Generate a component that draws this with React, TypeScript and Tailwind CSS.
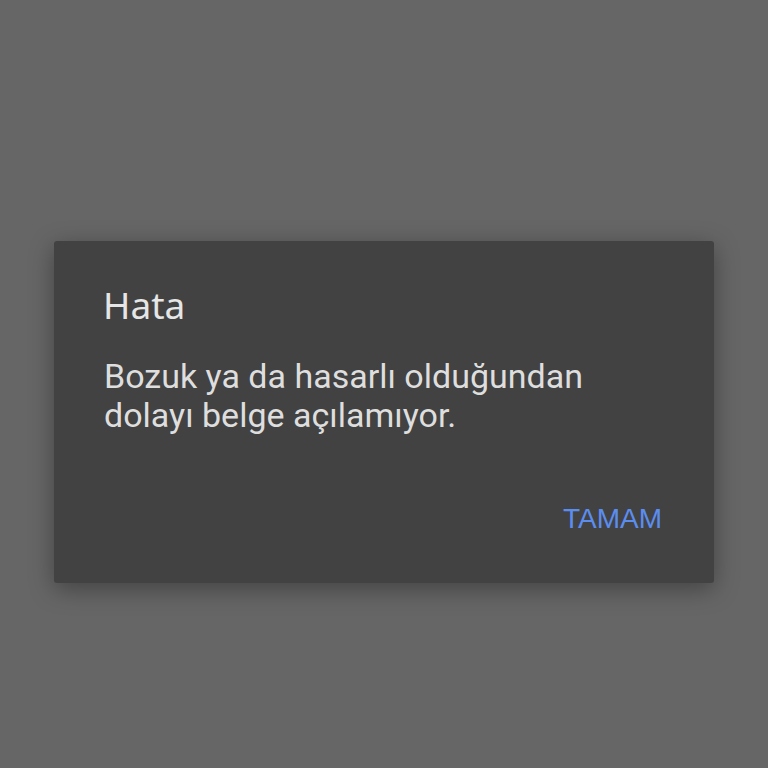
import React from 'react';

const App: React.FC = () => {
  return (
    <div className="w-[768px] h-[768px] bg-[#666666] pt-[241px] px-[54px]">
      {/* Error dialog */}
      <div className="h-[342px] flex flex-col bg-[#424242] rounded-[3px] shadow-[0_6px_24px_rgba(0,0,0,0.35)] pt-[42px] pb-[50px] pl-[49px] pr-[52px]">
        <h2 className="text-[37px] leading-[44px] text-[#e6e6e6] font-['Noto_Sans',sans-serif]">
          Hata
        </h2>
        <p className="mt-[30px] pl-[1px] w-[560px] text-[34px] leading-[39px] text-[#dedede] font-['Roboto',sans-serif]">
          Bozuk ya da hasarlı olduğundan dolayı belge açılamıyor.
        </p>
        <div className="flex-1" />
        <div className="flex justify-end">
          <button className="text-[28px] leading-none text-[#5b8def] font-['Liberation_Sans',sans-serif]">
            TAMAM
          </button>
        </div>
      </div>
    </div>
  );
};

export default App;
